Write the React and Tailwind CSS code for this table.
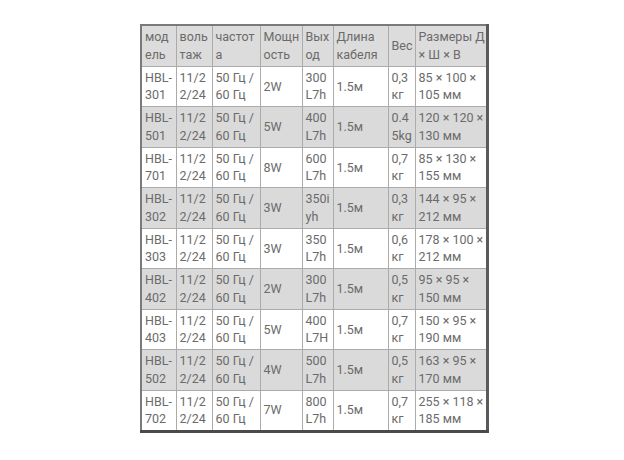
import React from "react";

// lines of each cell are split with "|" exactly as the narrow columns wrap them
const headers = ["мод|ель", "воль|таж", "частот|а", "Мощн|ость", "Вых|од", "Длина|кабеля", "Вес", "Размеры Д|× Ш × В"];

const rows = [
    ["HBL-|301", "11/2|2/24", "50 Гц /|60 Гц", "2W", "300|L7h", "1.5м", "0,3|кг", "85 × 100 ×|105 мм"],
    ["HBL-|501", "11/2|2/24", "50 Гц /|60 Гц", "5W", "400|L7h", "1.5м", "0.4|5kg", "120 × 120 ×|130 мм"],
    ["HBL-|701", "11/2|2/24", "50 Гц /|60 Гц", "8W", "600|L7h", "1.5м", "0,7|кг", "85 × 130 ×|155 мм"],
    ["HBL-|302", "11/2|2/24", "50 Гц /|60 Гц", "3W", "350i|yh", "1.5м", "0,3|кг", "144 × 95 ×|212 мм"],
    ["HBL-|303", "11/2|2/24", "50 Гц /|60 Гц", "3W", "350|L7h", "1.5м", "0,6|кг", "178 × 100 ×|212 мм"],
    ["HBL-|402", "11/2|2/24", "50 Гц /|60 Гц", "2W", "300|L7h", "1.5м", "0,5|кг", "95 × 95 ×|150 мм"],
    ["HBL-|403", "11/2|2/24", "50 Гц /|60 Гц", "5W", "400|L7H", "1.5м", "0,7|кг", "150 × 95 ×|190 мм"],
    ["HBL-|502", "11/2|2/24", "50 Гц /|60 Гц", "4W", "500|L7h", "1.5м", "0,5|кг", "163 × 95 ×|170 мм"],
    ["HBL-|702", "11/2|2/24", "50 Гц /|60 Гц", "7W", "800|L7h", "1.5м", "0,7|кг", "255 × 118 ×|185 мм"],
];

const widths = ["w-[35px]", "w-[36px]", "w-[48px]", "w-[42px]", "w-[31px]", "w-[55px]", "w-[27px]", "w-[72px]"];

function Lines({ text }) {
    return text.split("|").map((line, i) => (
        <div key={i} className="whitespace-nowrap">
            {line}
        </div>
    ));
}

export default function App() {
    return (
        <div className="w-[624px] h-[460px] bg-white pt-[24px] pl-[140px]" style={{ fontFamily: "Roboto, 'Noto Sans', sans-serif" }}>
            <table className="table-fixed border-collapse w-[348px] border-t-2 border-l-2 border-r-[3px] border-b-[3px] border-t-[#7a7a7a] border-l-[#7a7a7a] border-r-[#5a5a5a] border-b-[#4a4a4a] text-[12.5px] leading-[17.5px] text-[#6b6b6b]">
                <colgroup>
                    {widths.map((w, i) => (
                        <col key={i} className={w} />
                    ))}
                </colgroup>
                <thead>
                    <tr className="bg-[#dcdcdc] h-[41px]">
                        {headers.map((h, i) => (
                            <th key={i} className="border border-[#ababab] text-left font-normal align-middle pl-[3px] pr-0 py-[2px] overflow-hidden">
                                <Lines text={h} />
                            </th>
                        ))}
                    </tr>
                </thead>
                <tbody>
                    {rows.map((row, r) => (
                        <tr key={r} className={`h-[40.5px] ${r % 2 === 1 ? "bg-[#dadada]" : "bg-white"}`}>
                            {row.map((c, i) => (
                                <td key={i} className="border border-[#ababab] align-middle pl-[3px] pr-0 py-[2px] overflow-hidden">
                                    <Lines text={c} />
                                </td>
                            ))}
                        </tr>
                    ))}
                </tbody>
            </table>
        </div>
    );
}
